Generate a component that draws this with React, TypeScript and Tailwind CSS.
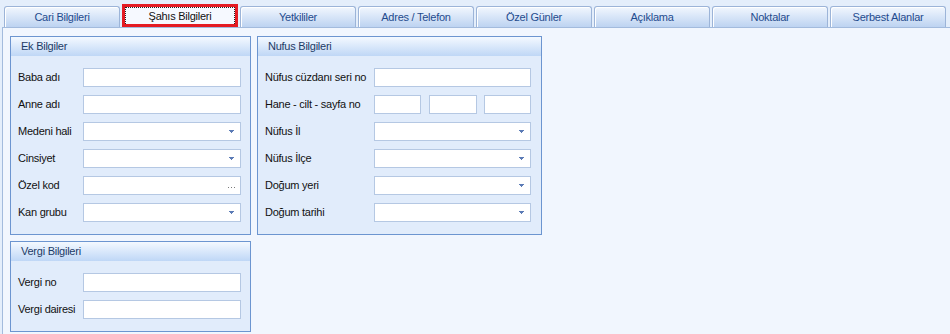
import React from 'react';

const TABS = [
  'Cari Bilgileri',
  'Şahıs Bilgileri',
  'Yetkililer',
  'Adres / Telefon',
  'Özel Günler',
  'Açıklama',
  'Noktalar',
  'Serbest Alanlar',
];

const ACTIVE = 1;

function Arrow() {
  return (
    <svg width="5" height="3" viewBox="0 0 5 3" className="shrink-0 mr-[1px]">
      <rect x="0" y="0" width="5" height="1" fill="#5b7bb6" />
      <rect x="1" y="1" width="3" height="1" fill="#5b7bb6" />
      <rect x="2" y="2" width="1" height="1" fill="#5b7bb6" />
    </svg>
  );
}

function Box({ kind, className = '' }: { kind?: 'combo' | 'button'; className?: string }) {
  return (
    <div
      className={`h-[19px] border border-[#b5c8e3] bg-white flex items-center justify-end pr-[5px] ${className}`}
    >
      {kind === 'combo' && <Arrow />}
      {kind === 'button' && (
        <div className="flex gap-[2px] mt-[3px]">
          <span className="w-px h-px bg-[#7a7a7a]" />
          <span className="w-px h-px bg-[#7a7a7a]" />
          <span className="w-px h-px bg-[#7a7a7a]" />
        </div>
      )}
    </div>
  );
}

function Row({
  label,
  labelW,
  children,
}: {
  label: string;
  labelW: string;
  children: React.ReactNode;
}) {
  return (
    <div className="flex items-center h-[19px]">
      <span className={`${labelW} shrink-0 text-[11px] text-[#111] whitespace-nowrap`}>{label}</span>
      {children}
    </div>
  );
}

function Group({
  title,
  className,
  bodyClass,
  children,
}: {
  title: string;
  className: string;
  bodyClass: string;
  children: React.ReactNode;
}) {
  return (
    <div className={`border border-[#6c95d0] bg-[#e1ecfb] flex flex-col ${className}`}>
      <div className="h-[19px] shrink-0 bg-gradient-to-b from-[#f4f9ff] to-[#bfd7f6] flex items-center pl-[10px] text-[11px] text-[#1d3b66]">
        {title}
      </div>
      <div className={`flex flex-col gap-[8px] pt-[12px] pb-[12px] ${bodyClass}`}>{children}</div>
    </div>
  );
}

export default function App() {
  return (
    <div className="w-[950px] h-[334px] overflow-hidden bg-[#e4eefb] font-['Liberation_Sans',Arial,sans-serif] tracking-[-0.25px]">
      {/* sekmeler */}
      <div className="h-[27px] flex items-end pl-[4px] gap-[2px]">
        {TABS.map((t, i) =>
          i === ACTIVE ? (
            <div
              key={t}
              className="w-[116px] h-[23px] shrink-0 border-[3px] border-[#e41b23] bg-[#f6f9ff] relative z-10"
            >
              <div className="h-full border border-dotted border-[#222] border-b-0 flex items-center justify-center text-[11px] text-[#111]">
                {t}
              </div>
            </div>
          ) : (
            <div
              key={t}
              className="w-[116px] h-[21px] shrink-0 rounded-t-[3px] border border-b-0 border-[#9cb4d8] bg-gradient-to-b from-[#f2f7fe] to-[#bdd3f1] shadow-[inset_1px_1px_0_#ffffff] flex items-center justify-center text-[11px] text-[#1f4b8e]"
            >
              {t}
            </div>
          )
        )}
      </div>

      {/* panel */}
      <div className="ml-[2px] h-[307px] border-l border-t border-[#a3bbdd] bg-[#f1f6fe] pl-[7px] pt-[8px] flex items-start gap-[6px]">
        <div className="flex flex-col gap-[6px]">
          <Group title="Ek Bilgiler" className="w-[241px]" bodyClass="pl-[7px]">
            <Row label="Baba adı" labelW="w-[65px]">
              <Box className="w-[158px]" />
            </Row>
            <Row label="Anne adı" labelW="w-[65px]">
              <Box className="w-[158px]" />
            </Row>
            <Row label="Medeni hali" labelW="w-[65px]">
              <Box kind="combo" className="w-[158px]" />
            </Row>
            <Row label="Cinsiyet" labelW="w-[65px]">
              <Box kind="combo" className="w-[158px]" />
            </Row>
            <Row label="Özel kod" labelW="w-[65px]">
              <Box kind="button" className="w-[158px]" />
            </Row>
            <Row label="Kan grubu" labelW="w-[65px]">
              <Box kind="combo" className="w-[158px]" />
            </Row>
          </Group>

          <Group title="Vergi Bilgileri" className="w-[241px]" bodyClass="pl-[7px]">
            <Row label="Vergi no" labelW="w-[65px]">
              <Box className="w-[158px]" />
            </Row>
            <Row label="Vergi dairesi" labelW="w-[65px]">
              <Box className="w-[158px]" />
            </Row>
          </Group>
        </div>

        <Group title="Nufus Bilgileri" className="w-[285px]" bodyClass="pl-[7px]">
          <Row label="Nüfus cüzdanı seri no" labelW="w-[109px]">
            <Box className="w-[157px]" />
          </Row>
          <Row label="Hane - cilt - sayfa no" labelW="w-[109px]">
            <div className="w-[157px] flex justify-between">
              <Box className="w-[47px]" />
              <Box className="w-[48px]" />
              <Box className="w-[47px]" />
            </div>
          </Row>
          <Row label="Nüfus İl" labelW="w-[109px]">
            <Box kind="combo" className="w-[157px]" />
          </Row>
          <Row label="Nüfus İlçe" labelW="w-[109px]">
            <Box kind="combo" className="w-[157px]" />
          </Row>
          <Row label="Doğum yeri" labelW="w-[109px]">
            <Box kind="combo" className="w-[157px]" />
          </Row>
          <Row label="Doğum tarihi" labelW="w-[109px]">
            <Box kind="combo" className="w-[157px]" />
          </Row>
        </Group>
      </div>
    </div>
  );
}
